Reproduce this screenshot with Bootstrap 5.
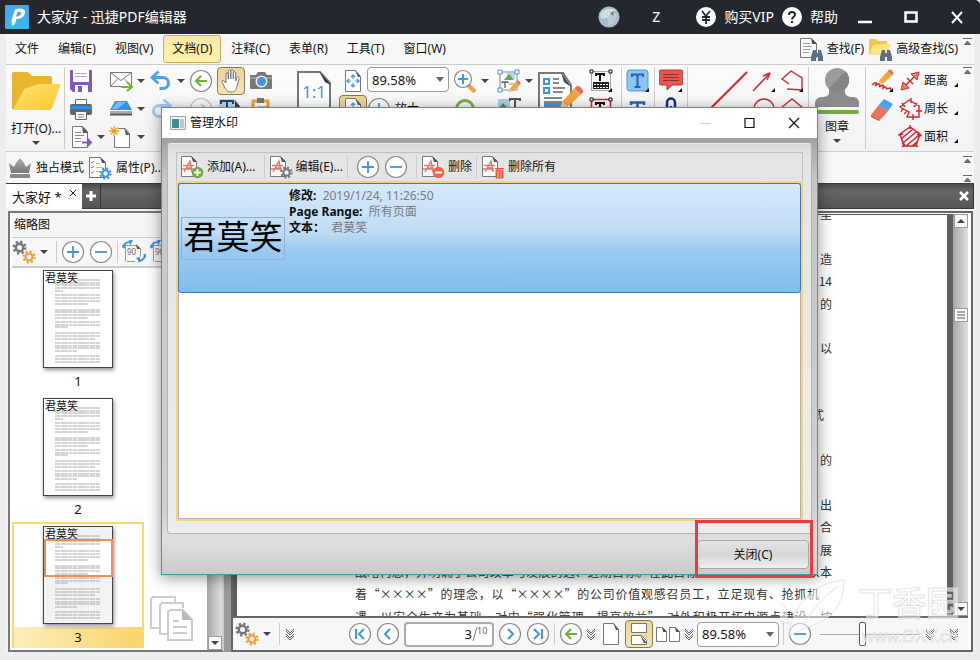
<!DOCTYPE html>
<html lang="zh-CN">
<head>
<meta charset="utf-8">
<meta name="viewport" content="width=device-width, initial-scale=1">
<title>大家好 - 迅捷PDF编辑器</title>
<link rel="stylesheet" href="https://cdn.jsdelivr.net/npm/bootstrap@5.3.0/dist/css/bootstrap.min.css">
<style>
body{font:12px/16px "Noto Sans","Noto Sans CJK SC",sans-serif;color:#111;background:#ededed;min-height:100vh;overflow:hidden}
button,input,select{font:inherit;color:inherit}
svg{display:block;flex:none}
.i24{width:24px;height:24px}
.plain{border:0;background:none;padding:0;white-space:nowrap;display:flex;align-items:center;justify-content:center;flex:none;color:inherit}
.app{min-height:100vh;position:relative}
.titlebar{height:34px;background:#25272f;color:#fff;padding:0 16px 0 5px;border-radius:0 5px 0 0;font-size:14px}
.titlebar .winctl{width:14px;height:14px}
.shell{margin:0 6px 0 6px;background:#f7f7f7}
.menus{height:31px;border-bottom:1px solid #ccc}
.menubar{gap:1px}
.menubar .mi{padding:0 9px;height:28px;border:1px solid transparent;border-width:1px 0;border-radius:3px;margin-top:1px}
.menubar .mi.on{background:linear-gradient(#f8e8ad,#fff3a8);border:1px solid #cfa95c;padding:0 8px}
.ribbon{height:87px;border-bottom:1px solid #ccc;padding:2px 0 0 2px;background:linear-gradient(#fbfbfb,#f3f3f3)}
.tool{width:24px;height:28px}
.wide{width:28px}
.pressed{background:linear-gradient(#e9d49a,#f7e6b4);border:1px solid #8f7a49;border-radius:4px}
.dd{width:16px;height:28px}
.dd::after,.tri{content:"";border:4px solid transparent;border-top-color:#444;border-bottom:0;width:0;height:0;display:block}
.bar{width:1px;background:#ccc;flex:none}
.ribbon .bar{height:82px}
.big{width:56px;height:84px;flex-direction:column;justify-content:flex-start}
.bigicon{width:48px;height:48px}
.page11{width:34px;height:48px}
.combo{appearance:none;border:1px solid #999;border-radius:4px;height:25px;width:82px;padding:0 4px;font-size:13px;background:#fff url("data:image/svg+xml,%3Csvg xmlns='http://www.w3.org/2000/svg' width='8' height='5'%3E%3Cpath d='M0 0h8l-4 5z' fill='%23666'/%3E%3C/svg%3E") no-repeat right 4px center}
.fold{width:12px;flex:none;color:#666}
.quick{height:31px;padding-left:2px}
.tabs{height:26px;background:linear-gradient(#4b4b4b,#666 30%,#555);border:1px solid #3b3b3b;border-width:1px 0}
.doctab{background:#fff;width:76px;padding:0 6px 0 6px;height:25px;font-size:13px}
.tabs .sq{width:19px;height:24px;color:#fff;border-right:1px solid #333}
.main{padding:2px 1px 0 2px;background:#f2f2f2;min-height:442px}
.thumbs{width:216px;border:2px solid #777;border-right-color:#ccc;padding:0 0 0 2px;background:#fff}
.thumbs .cap{height:24px;padding-left:2px;background:#f5f5f5}
.thumbs .tools{height:31px;background:#f6f6f6;border:1px solid #ccc;border-width:1px 0 2px}
.thumbs .tools .bar,.status .bar,.dlgtools .bar{height:22px}
.strip{width:132px}
.pageitem{height:128px;border:2px solid transparent;padding-top:2px;display:flex;flex-direction:column;align-items:center;text-decoration:none;color:#111;font-size:13px;position:relative;flex:none}
.pageitem:first-child{height:126px;padding-top:0}
.pageitem.on{height:126px;border-color:#f6d877;border-bottom:0}
.pageitem.on .num{background:linear-gradient(90deg,#fdeebb,#fbd468)}
.pageitem .sheet{width:70px;height:98px;border:1px solid #444;box-shadow:1px 2px 4px rgba(0,0,0,.45);background:#fff;overflow:hidden;position:relative}
.pageitem .num{width:100%;height:21px;line-height:20px;text-align:center;margin-top:3px}
.sheet .wm{position:absolute;top:0;left:1px;font-size:11px;line-height:14px}
.sheet svg{width:68px;height:96px}
.viewbox{position:absolute;left:30px;top:15px;width:69px;height:38px;border:2px solid #ef8f55}
.pageitem.on .sheet{background:linear-gradient(#f1f3f6 14px,#fff 14px,#fff 50px,#f3f3f5 50px)}
.sb{width:15px;background:linear-gradient(90deg,#aaa,#e2e2e2);border-left:1px solid #aaa}
.sb .box{height:14px;background:#fafafa;border:1px solid #999}
.sb .before{flex:2}
.sb .after{flex:7}
.ghost{position:absolute;right:12px;bottom:8px;width:44px;height:46px}
.split{width:7px;background:#999}
.docframe{border:2px solid #666;background:#fff;padding:1px 3px 0 0}
.canvas{background:#5f5f5f;padding:0 6px 0 4px;overflow:hidden;border-top:1px solid #555}
.paper{background:#fff;position:relative;overflow:hidden;height:100%}
.lines{position:absolute;top:-12px;bottom:-12px;left:118px;width:477px;font:12px/22px "Noto Sans CJK SC",sans-serif;color:#333}
.lines p{margin:0;height:22px;white-space:nowrap;text-align:right}
.lines .full{text-align-last:justify}
.lines .short{margin-right:13px}
.status{height:34px;border-top:2px solid #666;background:#f7f7f7;padding-left:2px}
.tight{gap:2px}
.pageno{border:2px solid #aaa;border-radius:4px;width:90px;height:25px;background:#fff;padding-right:2px}
.pageno input{border:0;width:66px;text-align:right;padding:0;background:none;font-size:13px}
.pageno sup{font-size:9px;top:-3px;color:#666}
.zoomer{appearance:none;width:100px;height:24px;background:linear-gradient(#aaa,#aaa) center/100% 1px no-repeat;margin:0}
.zoomer::-webkit-slider-thumb{appearance:none;width:7px;height:24px;border:1px solid #555;border-radius:2px;background:#fff}
.base{height:8px}
.dialogwin{position:absolute;left:161px;right:162px;top:107px;height:468px;border:1px solid #26a89b;box-shadow:0 3px 14px rgba(0,0,0,.42);background:#c9c9c9;z-index:5}
.dlgtitle{height:30px;background:#fff;padding:0 17px 0 8px;flex:none}
.dlgbody{background:linear-gradient(#a0a0a0,#c7c7c7 40px,#cfcfcf 85%,#e0e0e0 92%,#cacaca);padding:5px}
.inner{background:linear-gradient(#d6d6d6,#e4e4e4 12px,#ececec);border:1px solid #b4b4b4;border-top-color:#eee;border-radius:4px;padding:8px 8px 12px}
.dlgtools{height:29px;border:1px solid #c0c0c0;border-bottom:0;padding-left:3px}
.dlgtools .act{gap:3px}
.listbox{border:2px solid #f3d67c;background:#fff;box-shadow:inset 0 0 0 1px #b9aeb8;border-radius:2px}
.selrow{height:110px;border:1px solid #3f76ba;border-radius:3px;background:linear-gradient(#d6e9fa,#bfdcf4 45%,#9ccaf0 60%,#82bcec);padding-left:2px}
.preview{width:104px;height:43px;border:1px solid #8fb2d3;font-size:33px;line-height:38px;color:#000}
.facts{padding:4px 0 0 4px}
.gray{color:#747b83}
.dlgfoot{padding:6px 3px 0 0}
.closebtn{width:112px;height:29px;border:1px solid #a6a6a6;border-radius:4px;background:linear-gradient(#e4e4e4,#d6d6d6 50%,#f0f0f0)}
.frame-red{position:absolute;right:4px;bottom:-4px;width:118px;height:58px;border:3px solid #ee3a3a;z-index:6;pointer-events:none}
.leafmark{position:absolute;right:10px;bottom:6px;width:190px;height:80px;z-index:4;pointer-events:none}
</style>
<script src="https://cdn.jsdelivr.net/npm/bootstrap@5.3.0/dist/js/bootstrap.bundle.min.js"></script>
</head>
<body>
<svg class="position-absolute" width="0" height="0" aria-hidden="true">
<defs>
<linearGradient id="gSky" x2="0" y2="1"><stop stop-color="#45a3ee"/><stop offset="1" stop-color="#3bb8e6"/></linearGradient>
<linearGradient id="gFold" x2="1" y2="1"><stop stop-color="#ffe27a"/><stop offset="1" stop-color="#fbc92d"/></linearGradient>
<linearGradient id="gCrown" x2="0" y2="1"><stop stop-color="#aaa"/><stop offset="1" stop-color="#777"/></linearGradient>
</defs>
<symbol id="logo" viewBox="0 0 24 24"><rect width="24" height="24" rx="1" fill="url(#gSky)"/><path d="M7 21 6.500 15 10 4.500c3-1.500 9-1.500 10 1.500.8 4-3 8-7 8l-1.500-.3L10 19z" fill="#fff"/><path d="m12.500 7-1.500 4.500c3 0 5-1.500 5-3.500 0-1.200-1.500-1.500-3.500-1z" fill="#45a8ea"/></symbol>
<symbol id="corner" viewBox="0 0 24 24"><path d="M23 19v4h-4z" fill="#111"/></symbol>
<symbol id="page" viewBox="0 0 24 24"><path d="M4.500 1.500h10l5 6v15h-15z" fill="#fff" stroke="#777"/><path d="M14 1l6 7h-3z" fill="#555"/></symbol>
<symbol id="save" viewBox="0 0 24 24"><path d="M2 1h20a1 1 0 0 1 1 1v21H4l-3-3V2a1 1 0 0 1 1-1z" fill="#7e57c2"/><path d="M4 1h16v12H4z" fill="#fff"/><path d="M6 4.500h12M6 7.500h12" stroke="#b9a5de"/><path d="M6 16h13v7H6z" fill="#fff"/><path d="M9 17h4v6H9z" fill="#7e57c2"/></symbol>
<symbol id="print" viewBox="0 0 24 24"><path d="M6.500 2.500h11v5h-11z" fill="#fff" stroke="#666"/><rect x="1" y="7" width="22" height="11" rx="2" fill="#666"/><path d="M1 9h22v3H1z" fill="#2f8fe6"/><path d="M6.500 14.500h11v8h-11z" fill="#fff" stroke="#666"/><path d="M9 17.500h6M9 20h6" stroke="#888"/></symbol>
<symbol id="export" viewBox="0 0 24 24"><path d="M3.500 1.500h10l5 5v16h-15z" fill="#fff" stroke="#777"/><path d="M13 1l6 7h-5z" fill="#555"/><path d="M6 7.500h6M6 10.500h9M6 13.500h6M6 16.500h6" stroke="#888"/><path d="M13 17.500h9m-4-4 4 4-4 4" fill="none" stroke="#7e57c2" stroke-width="2"/></symbol>
<symbol id="mail" viewBox="0 0 24 24"><path d="M1.500 3.500h21v14h-21z" fill="#fff" stroke="#777"/><path d="m1.500 3.500 10.500 8 10.500-8M1.500 17.500 9 9.500m13.500 8-7.500-8" fill="none" stroke="#777"/><path d="M12 18h10m-4-5 5 5-5 4" fill="none" stroke="#6fb52c" stroke-width="2"/></symbol>
<symbol id="scan" viewBox="0 0 24 24"><path d="M6 4h12l5 9H1z" fill="#2f93ec"/><path d="M8 5h9L8 12H3z" fill="#76bdf7"/><path d="M1 14h22v2.500H1z" fill="#aaa"/><path d="M1 16.500h22v2H1z" fill="#555"/></symbol>
<symbol id="newdoc" viewBox="0 0 24 24"><path d="M5.500 3.500h11l4 5v14h-15z" fill="#fff" stroke="#777"/><path d="M15 3l6 7h-4z" fill="#555"/><circle cx="5" cy="6" r="5" fill="#fff"/><path d="M5 1v10M0 6h10M1.500 2.500l7 7m0-7-7 7" stroke="#f39a1e" stroke-width="1.300"/></symbol>
<symbol id="undo" viewBox="0 0 24 24"><path d="M4 8.500h9.500c8 0 8 11 0 11h-3" fill="none" stroke="#49a3ee" stroke-width="3"/><path d="m9.500 2.500-6.500 6 6.500 6" fill="none" stroke="#49a3ee" stroke-width="2.800"/></symbol>
<symbol id="redo" viewBox="0 0 24 24"><g opacity=".5"><path d="M20 8.500h-9.500c-8 0-8 11 0 11h3" fill="none" stroke="#49a3ee" stroke-width="3"/><path d="m14.500 2.500 6.500 6-6.500 6" fill="none" stroke="#49a3ee" stroke-width="2.800"/></g></symbol>
<symbol id="ring" viewBox="0 0 24 24"><circle cx="12" cy="12" r="10.500" fill="#fff" stroke="#8a8a8a" stroke-width="1.200"/></symbol>
<symbol id="back" viewBox="0 0 24 24"><use href="#ring"/><path d="M18 12H7m5-5-5 5 5 5" fill="none" stroke="#6fb52c" stroke-width="2"/></symbol>
<symbol id="fwd" viewBox="0 0 24 24"><g opacity=".5"><use href="#ring"/><path d="M6 12h11m-5-5 5 5-5 5" fill="none" stroke="#aaa" stroke-width="2"/></g></symbol>
<symbol id="plus" viewBox="0 0 24 24"><use href="#ring"/><path d="M6 12h12M12 6v12" stroke="#3f95e2" stroke-width="1.800"/></symbol>
<symbol id="minus" viewBox="0 0 24 24"><use href="#ring"/><path d="M6 12h12" stroke="#3f95e2" stroke-width="1.800"/></symbol>
<symbol id="first" viewBox="0 0 24 24"><use href="#ring"/><path d="M8 7v10m8-10-5 5 5 5" fill="none" stroke="#3f95e2" stroke-width="2"/></symbol>
<symbol id="prev" viewBox="0 0 24 24"><use href="#ring"/><path d="m14 7-5 5 5 5" fill="none" stroke="#3f95e2" stroke-width="2"/></symbol>
<symbol id="next" viewBox="0 0 24 24"><use href="#ring"/><path d="m10 7 5 5-5 5" fill="none" stroke="#3f95e2" stroke-width="2"/></symbol>
<symbol id="last" viewBox="0 0 24 24"><use href="#ring"/><path d="M16 7v10M8 7l5 5-5 5" fill="none" stroke="#3f95e2" stroke-width="2"/></symbol>
<symbol id="hand" viewBox="0 0 24 24"><path d="M7 14V5c0-1.800 2.300-1.800 2.300 0v5V2.500c0-2 2.500-2 2.500 0V10 2c0-1.800 2.500-1.800 2.500 0v8-6c0-1.800 2.400-1.800 2.400 0v8l1-3c.6-2 2.800-1.300 2.400.5L18 17c-1 4-2 6-6 6-3 0-4.500-1.500-6-4l-3-6c-.8-1.800 1-2.500 2-1z" fill="#fff" stroke="#777"/></symbol>
<symbol id="camera" viewBox="0 0 24 24"><path d="M2 6h5l2-3h7l2 3h4a1 1 0 0 1 1 1v12a1 1 0 0 1-1 1H2a1 1 0 0 1-1-1V7a1 1 0 0 1 1-1z" fill="#777"/><path d="M1 8h22v2H1z" fill="#9b9b9b"/><circle cx="12.500" cy="12.500" r="6" fill="#eee"/><circle cx="12.500" cy="12.500" r="4.500" fill="#3f95e2"/></symbol>
<symbol id="tsel" viewBox="0 0 24 24"><path d="M0 2h16v18H0z" fill="#b6dbf8"/><path d="M2 7V4h12v3M8 4v13m-3 0h6" fill="none" stroke="#345" stroke-width="2"/><path d="m16 3 7 9h-5l3 8-5-5z" fill="#444"/></symbol>
<symbol id="paste" viewBox="0 0 24 24"><path d="M4 4h15v18H4z" fill="#fff" stroke="#eda23b" stroke-width="3"/><path d="M8 1h7v5H8z" fill="#777"/><path d="M8 10h11v12H8z" fill="#fff" stroke="#777"/></symbol>
<symbol id="fit" viewBox="0 0 24 24"><use href="#page"/><path d="M12 6v4m-2-2 2-2 2 2m-2 6v4m-2-2 2 2 2-2M6 12h4M8 10l-2 2 2 2m6-2h4m-2-2 2 2-2 2" fill="none" stroke="#3f95e2" stroke-width="1.200"/></symbol>
<symbol id="zoomin" viewBox="0 0 24 24"><path d="m15 16 7 7" stroke="#f4a43a" stroke-width="4"/><circle cx="10" cy="10" r="8.500" fill="#fff" stroke="#888" stroke-width="1.200"/><path d="M5 10h10M10 5v10" stroke="#3f95e2" stroke-width="2"/></symbol>
<symbol id="loop" viewBox="0 0 24 24"><circle cx="12" cy="12" r="8.500" fill="none" stroke="#7bae46" stroke-width="3"/></symbol>
<symbol id="pencil" viewBox="0 0 24 24"><path d="M15 3 21 9 8 21l-5-5z" fill="#f5a63b"/><path d="m15 3 2-2c2-1 7 3 6 6l-2 2z" fill="#ef6a5a"/><path d="m3 16 5 5-7 2z" fill="#e7c89b"/></symbol>
<symbol id="picedit" viewBox="0 0 24 24"><path d="M3 3h17v18H3z" fill="#fff" stroke="#888"/><path d="M10 4h8v6h-8z" fill="#aad9f5"/><path d="m7 11 5-6 5 6z" fill="#6aa843"/><path d="M5 14v-1h6v1M8 13v6" fill="none" stroke="#222"/><path d="M12 15h6" stroke="#888"/><path d="M1 1h4v4H1zM18 1h4v4h-4zM1 19h4v4H1z" fill="#fff" stroke="#3f95e2"/><use href="#pencil" x="11" y="11" width="13" height="13"/></symbol>
<symbol id="pict" viewBox="0 0 24 24"><path d="M1 2h12v16H1z" fill="#a9cfe8"/><path d="m1 13 5-7 7 8v5H1z" fill="#538b55"/><path d="M13 4V2h10v2M18 2v11m-2 0h4" fill="none" stroke="#555" stroke-width="2"/></symbol>
<symbol id="docedit" viewBox="0 0 48 48"><path d="M2 2h24l8 12v34H2z" fill="#fff" stroke="#777" stroke-width="2"/><path d="M24 1 34 16l-7-5z" fill="#444"/><g fill="none" stroke="#3f95e2" stroke-width="2"><path d="M7 8h5v5H7zM7 17h5v5H7z"/></g><path d="M16 8h6M16 12h6M16 17h12M16 21h10M7 27h18M7 31h18M7 35h18" stroke="#888" stroke-width="2"/><path d="M7 33h19" stroke="#3f95e2" stroke-width="2"/><use href="#pencil" x="22" y="14" width="25" height="25"/></symbol>
<symbol id="tkey" viewBox="0 0 24 24"><path d="M2.500 2.500h19v19h-19z" fill="none" stroke="#555" stroke-dasharray="1 1"/><path d="M7 7V5h8v2M11 5v7" fill="none" stroke="#111" stroke-width="2"/><path d="M4 13h16v7H4z" fill="#222"/><path d="M5 15.500h14M5 18.500h14" stroke="#fff" stroke-dasharray="2 1"/><path d="M1 1h3v3H1zM20 1h3v3h-3z" fill="#fff" stroke="#111"/><use href="#corner"/></symbol>
<symbol id="tred" viewBox="0 0 24 24"><path d="M2.500 2.500h19v19h-19z" fill="none" stroke="#d8203a" stroke-width="1.500"/><path d="M7 8V6h8v2M11 6v9" fill="none" stroke="#111" stroke-width="2"/><path d="M1 1h3v3H1zM20 1h3v3h-3z" fill="#fff" stroke="#111"/></symbol>
<symbol id="tblue" viewBox="0 0 24 24"><rect x="1" y="1" width="21" height="21" rx="3" fill="#8bc5f5" stroke="#4b98dc"/><path d="M6 8V5.500h11V8M11.500 5v13m-3 0h6" fill="none" stroke="#2865ac" stroke-width="2.200"/><use href="#corner"/></symbol>
<symbol id="tplain" viewBox="0 0 24 24"><path d="M5 8V5.500h13V8M11.500 5v15" fill="none" stroke="#2865ac" stroke-width="2.500"/></symbol>
<symbol id="comment" viewBox="0 0 24 24"><path d="M2 1h20a2 2 0 0 1 2 2v11a2 2 0 0 1-2 2H13l-5 5v-5H2a2 2 0 0 1-2-2V3a2 2 0 0 1 2-2z" fill="#e95450" stroke="#bd3737"/><path d="M4 5.500h16M4 8.500h16M4 11.500h16" stroke="#8f2f2f"/><use href="#corner"/></symbol>
<symbol id="clip" viewBox="0 0 24 24"><path d="M8 24V6c0-6 8-6 8 0v16M12 9v15" fill="none" stroke="#1d2f78" stroke-width="2.500"/></symbol>
<symbol id="line" viewBox="0 0 40 40"><path d="M2 38 39 1" stroke="#d9232e" stroke-width="2"/></symbol>
<symbol id="arrow" viewBox="0 0 24 24"><path d="M1 22 18 4" stroke="#d9232e" stroke-width="1.500"/><path d="m18 4-7 3m7-3-3 7" fill="none" stroke="#d9232e" stroke-width="1.500"/><use href="#corner"/></symbol>
<symbol id="poly" viewBox="0 0 24 24"><path d="m9 15-7-5 9-8 11 7v12l-15-1" fill="none" stroke="#d9232e" stroke-width="1.400"/><use href="#corner"/></symbol>
<symbol id="oval" viewBox="0 0 24 24"><circle cx="12" cy="12" r="10" fill="none" stroke="#d9232e" stroke-width="1.400"/></symbol>
<symbol id="pent" viewBox="0 0 24 24"><path d="m1 11 11-9 11 9-4 11H5z" fill="none" stroke="#d9232e" stroke-width="1.400"/></symbol>
<symbol id="stamp" viewBox="0 0 48 48"><path d="M16 20h16v5c0 4 4 5 8 5s6 3 6 6v4H2v-4c0-3 3-6 7-6s7-1 7-5z" fill="#8b8b8b"/><circle cx="24" cy="13" r="12" fill="#9c9c9c"/><path d="m15.500 21.500 17-17c8 8 2 20.500-8.500 20.500-4 0-6.500-1.500-8.500-3.500z" fill="#858585"/><rect x="2" y="43" width="44" height="4" rx="2" fill="#78ac3e"/></symbol>
<symbol id="draw" viewBox="0 0 24 24"><use href="#pencil" x="7" y="0" width="17" height="17"/><path d="M2 16c4-4 6-2 3 1 4-4 6-1 4 1 4-3 5-2 4 1l2-1 2 2 3-1 1 2" fill="none" stroke="#d9232e" stroke-width="1.500"/><use href="#corner"/></symbol>
<symbol id="eraser" viewBox="0 0 24 24"><path d="M14 2 23 7 18 14 8 9z" fill="#4ba3e8"/><path d="m8 9 10 5-8 9-9-5z" fill="#ef6f57"/><path d="m1 18 9 5-1 1-8-4z" fill="#c3574a"/></symbol>
<symbol id="dist" viewBox="0 0 24 24"><path d="M5 19 19 5M9 9l6 6" stroke="#d9232e" stroke-width="1.500"/><path d="m21 3-2 8-6-6zM3 21l2-8 6 6z" fill="#ef7a76" stroke="#d9232e"/></symbol>
<symbol id="perim" viewBox="0 0 24 24"><path d="M2 10 11 3l10 6v11H9l2-5zM4 6l3 4M13 1v5m6 0-3 4m2 4h6m-9 3v6M5 11l-2 4m6-1-3 3" fill="none" stroke="#d9232e" stroke-width="1.400"/></symbol>
<symbol id="area" viewBox="0 0 24 24"><path d="m2 9 10-7 10 7-4 12H6zM3 14 15 4M4 19 19 6M8 21 21 10M14 21l6-5M12 0v4M0 10l5-1m14 0 5 2M4 22l3-3m9 0 4 3" fill="none" stroke="#d9232e" stroke-width="1.500"/></symbol>
<symbol id="bino" viewBox="0 0 12 12"><path d="M2 1h3v3h2V1h3l2 7v4H7V8H5v4H0V8z" fill="#5c6e82"/></symbol>
<symbol id="find" viewBox="0 0 24 24"><path d="M1.500 1.500h11l5 5v14h-16z" fill="#fff" stroke="#777"/><path d="m12 1 6 6h-5z" fill="#555"/><path d="M4 6.500h7M4 9.500h9M4 12.500h7M4 15.500h6" stroke="#999"/><use href="#bino" x="12" y="12" width="12" height="12"/></symbol>
<symbol id="folder" viewBox="0 0 50 42"><path d="M1 3q0-2 2-2h14l4 4h18q2 0 2 2v10L8 38H1z" fill="#e8b52c"/><path d="M13 18l15-5h20q2 0 1 2l-8 22q-1 2-3 2H2z" fill="url(#gFold)"/></symbol>
<symbol id="findadv" viewBox="0 0 24 24"><path d="M1 2h7l2 2h9v14H1z" fill="#f4c744"/><path d="m5 8 14-1h4l-4 11H1z" fill="#fbe389"/><use href="#bino" x="12" y="12" width="12" height="12"/></symbol>
<symbol id="crown" viewBox="0 0 24 24"><path d="m1 7 5 4 2-4 4-5 4 5 2 4 5-4-2 10H3z" fill="url(#gCrown)"/><path d="M2 18h20v4H2z" fill="#888"/></symbol>
<symbol id="gear" viewBox="0 0 16 16"><circle cx="8" cy="8" r="4" fill="#f5f5f5" stroke="currentColor" stroke-width="2.500"/><circle cx="8" cy="8" r="6.200" fill="none" stroke="currentColor" stroke-width="2.600" stroke-dasharray="2.430 2.440"/></symbol>
<symbol id="gears" viewBox="0 0 24 24"><use href="#gear" x="0" y="0" width="15" height="15" color="#777"/><use href="#gear" x="10" y="10" width="14" height="14" color="#f1a033"/></symbol>
<symbol id="props" viewBox="0 0 24 24"><path d="M1.500 1.500h11l5 5v15h-16z" fill="#fff" stroke="#777"/><path d="m12 1 6 6h-4z" fill="#555"/><path d="m3 6 1 1 2-2M3 11l1 1 2-2M3 16l1 1 2-2" fill="none" stroke="#e7643e"/><path d="M8 7.500h4M8 11.500h6M8 15.500h4" stroke="#e7a07e"/><use href="#gear" x="11" y="11" width="13" height="13" color="#3f95e2"/></symbol>
<symbol id="wmdoc" viewBox="0 0 24 24"><path d="M1.500 1.500h10l5 5v15h-15z" fill="#fff" stroke="#777"/><path d="m11 1 6 6h-4z" fill="#555"/><path d="m4 17 6-11 2 11M6 13h6M3 10.500h11M2 14h11" fill="none" stroke="#e57570" stroke-width="1.400"/></symbol>
<symbol id="wmadd" viewBox="0 0 24 24"><use href="#wmdoc"/><circle cx="17.500" cy="17.500" r="5.800" fill="#69ad3d"/><path d="M14 17.500h7M17.500 14v7" stroke="#fff" stroke-width="2"/></symbol>
<symbol id="wmedit" viewBox="0 0 24 24"><use href="#wmdoc"/><use href="#gear" x="11" y="11" width="13" height="13" color="#777"/></symbol>
<symbol id="wmdel" viewBox="0 0 24 24"><use href="#wmdoc"/><circle cx="17.500" cy="17.500" r="5.800" fill="#f06449"/><path d="M14 17.500h7" stroke="#fff" stroke-width="2"/></symbol>
<symbol id="wmall" viewBox="0 0 24 24"><use href="#wmdoc"/><path d="M15 15h7v8h-7zM14 13.500h9" fill="#f06449" stroke="#e05535"/><path d="M17 15v8m3-8v8" stroke="#f9a08b"/></symbol>
<symbol id="rot" viewBox="0 0 24 24"><path d="M3.500 21.500v-16h11l4 4v7M5 21.500h8" fill="none" stroke="#999"/><path d="m14 4 5 5h-4z" fill="#555"/><text x="5" y="15" font-size="8" font-family="Noto Sans" fill="#666">90</text><path d="M1 8q1-6 7-6M23 15q-1 6-7 6" fill="none" stroke="#3f95e2" stroke-width="2"/><path d="M7 0h4L8 6zM0 5h4L2 9zM14 18l4-1v6zM21 14h3v4z" fill="#3f95e2"/></symbol>
<symbol id="foldi" viewBox="0 0 12 8"><path d="M1 .500h9M2.500 6.500h6L5.500 3z" fill="#777" stroke="#666"/></symbol>
<symbol id="chev" viewBox="0 0 12 14"><path d="m2 2 4 4 4-4M2 7l4 4 4-4M2 4l4 4 4-4M2 9l4 4 4-4" fill="none" stroke="#666"/></symbol>
<symbol id="cont" viewBox="0 0 24 24"><path d="M4.500 1.500h15v9h-15zM4.500 13.500h10l5 5v4h-15z" fill="#fff" stroke="#777"/><path d="m13 13 7 8h-3z" fill="#555"/></symbol>
<symbol id="two" viewBox="0 0 26 24"><path d="M1.500 5.500h6l4 4v10h-10zM14.500 5.500h6l4 4v10h-10z" fill="#fff" stroke="#777"/><path d="m7 5 5 5H8zM20 5l5 5h-4z" fill="#555"/></symbol>
<symbol id="txtlines" viewBox="0 0 68 96"><path d="M33 9h23M11 12h45m-45 2h45m-45 3h45m-45 3h8m-8 4h45m-45 3h45m-45 3h45m-45 3h33m-33 6h45m-45 2h45m-45 3h45m-45 3h33m-33 4h45m-45 3h45m-45 2h13m-13 6h45m-45 3h45m-45 3h40m-40 4h45m-45 3h45m-45 2h45m-45 3h22m-22 5h45m-45 3h45m-45 3h45" fill="none" stroke="#aaa" stroke-width="1" stroke-dasharray="5 .5 8 .4 3 .6"/></symbol>
</svg>

<div class="app d-flex flex-column">
<header class="titlebar d-flex align-items-center">
  <svg class="i24"><use href="#logo"/></svg><span class="ms-2">大家好 - 迅捷PDF编辑器</span>
  <svg class="ms-auto" width="22" height="22" viewBox="0 0 22 22"><circle cx="11" cy="11" r="10.500" fill="#a9bdca"/><path d="M2 8q7-8 16-4-4 1-6 5t-9 3z" fill="#cfdde5"/><path d="M9 13q5-8 10-5-1 9-8 12z" fill="#bccbd5"/><path d="m12 7 4-2-1 5z" fill="#8e7f7a"/></svg>
  <span class="px-4 mx-2">Z</span>
  <button class="plain ms-1" type="button"><svg class="me-2" width="20" height="20" viewBox="0 0 20 20"><circle cx="10" cy="10" r="10" fill="#fff"/><path d="m6 4 4 5 4-5m-4 5v8m-4-7h8m-8 3h8" fill="none" stroke="#25272f" stroke-width="1.800"/></svg>购买VIP</button>
  <button class="plain ms-2 me-1" type="button"><svg class="me-2" width="20" height="20" viewBox="0 0 20 20"><circle cx="10" cy="10" r="10" fill="#fff"/><path d="M7 8q0-3 3-3t3 2.500q0 1.500-1.500 2.500T10 12.500M10 14v2" fill="none" stroke="#25272f" stroke-width="2"/></svg>帮助</button>
  <button class="plain winctl mx-3" type="button" aria-label="最小化"><svg width="14" height="14"><path d="M0 12h14" stroke="#fff" stroke-width="2.500"/></svg></button>
  <button class="plain winctl mx-3" type="button" aria-label="最大化"><svg width="14" height="14"><path d="M1.500 2.500h11v9h-11z" fill="none" stroke="#fff" stroke-width="2.500"/></svg></button>
  <button class="plain winctl ms-3" type="button" aria-label="关闭"><svg width="14" height="14"><path d="m2 2 10 11M12 2 2 13" stroke="#fff" stroke-width="2"/></svg></button>
</header>

<div class="shell d-flex flex-column flex-grow-1">
<nav class="menus d-flex">
  <div class="menubar d-flex"><button class="plain mi">文件</button><button class="plain mi">编辑(E)</button><button class="plain mi">视图(V)</button><button class="plain mi on">文档(D)</button><button class="plain mi">注释(C)</button><button class="plain mi">表单(R)</button><button class="plain mi">工具(T)</button><button class="plain mi">窗口(W)</button></div>
  <div class="ms-auto d-flex gap-1"><button class="plain gap-1"><svg class="i24"><use href="#find"/></svg>查找(F)</button><button class="plain gap-1"><svg class="i24"><use href="#findadv"/></svg>高级查找(S)</button><svg class="fold mt-1" height="8"><use href="#foldi"/></svg></div>
</nav>

<div class="ribbon d-flex">
  <button class="plain big"><svg class="mt-1" width="50" height="42"><use href="#folder"/></svg><span class="mt-2">打开(O)...</span><span class="tri mt-1"></span></button>
  <span class="bar me-1"></span>
  <div><button class="plain tool" aria-label="保存"><svg class="i24"><use href="#save"/></svg></button><button class="plain tool" aria-label="打印"><svg class="i24"><use href="#print"/></svg></button><button class="plain tool" aria-label="导出"><svg class="i24"><use href="#export"/></svg></button></div>
  <div class="d-flex flex-column justify-content-end"><button class="plain dd" aria-label="更多"></button></div>
  <div><button class="plain tool" aria-label="邮件"><svg class="i24"><use href="#mail"/></svg></button><button class="plain tool" aria-label="扫描"><svg class="i24"><use href="#scan"/></svg></button><button class="plain tool" aria-label="新建"><svg class="i24"><use href="#newdoc"/></svg></button></div>
  <div><button class="plain dd" aria-label="更多"></button><button class="plain dd" aria-label="更多"></button><button class="plain dd" aria-label="更多"></button></div>
  <div><button class="plain tool" aria-label="撤销"><svg class="i24"><use href="#undo"/></svg></button><button class="plain tool" aria-label="重做"><svg class="i24"><use href="#redo"/></svg></button></div>
  <div><button class="plain dd" aria-label="更多"></button><button class="plain dd" aria-label="更多"></button></div>
  <div><button class="plain tool" aria-label="后退"><svg class="i24"><use href="#back"/></svg></button><button class="plain tool" aria-label="前进"><svg class="i24"><use href="#fwd"/></svg></button></div>
  <div class="mx-1"><button class="plain tool wide pressed" aria-label="手形"><svg class="i24"><use href="#hand"/></svg></button><button class="plain tool wide" aria-label="选择文本"><svg class="i24"><use href="#tsel"/></svg></button></div>
  <div><button class="plain tool" aria-label="快照"><svg class="i24"><use href="#camera"/></svg></button><button class="plain tool" aria-label="粘贴"><svg class="i24"><use href="#paste"/></svg></button></div>
  <div class="d-flex align-items-center"><button class="plain dd" aria-label="更多"></button></div>
  <button class="plain align-items-start ms-2 pt-1" aria-label="实际大小 1:1"><svg class="page11" viewBox="0 0 34 48"><path d="M1 1h22l10 11v40H1z" fill="#fff" stroke="#777" stroke-width="2"/><path d="m22 0 12 14-6-3z" fill="#333"/><text x="17" y="27" text-anchor="middle" font-size="17" fill="#3f95e2" font-family="Noto Sans">1:1</text></svg></button>
  <div class="ms-2"><div class="d-flex"><button class="plain tool wide" aria-label="适合页面"><svg class="i24"><use href="#fit"/></svg></button><select class="combo" aria-label="缩放"><option>89.58%</option></select></div>
  <div class="d-flex"><button class="plain tool wide pressed" aria-label="适合宽度"><svg class="i24"><use href="#fit"/></svg></button><button class="plain gap-1"><svg class="i24"><use href="#plus"/></svg>放大</button></div></div>
  <div class="ms-1"><button class="plain tool" aria-label="放大"><svg class="i24"><use href="#zoomin"/></svg></button><button class="plain tool" aria-label="旋转"><svg class="i24"><use href="#loop"/></svg></button></div>
  <div><button class="plain dd" aria-label="更多"></button></div>
  <div class="ms-1"><button class="plain tool" aria-label="编辑内容"><svg class="i24"><use href="#picedit"/></svg></button><button class="plain tool" aria-label="图片文字"><svg class="i24"><use href="#pict"/></svg></button></div>
  <div><button class="plain dd" aria-label="更多"></button><button class="plain dd" aria-label="更多"></button></div>
  <button class="plain align-items-start pt-1" aria-label="编辑表单"><svg class="bigicon"><use href="#docedit"/></svg></button>
  <div class="ms-1"><button class="plain tool" aria-label="打字机"><svg class="i24"><use href="#tkey"/></svg></button><button class="plain tool" aria-label="文本框"><svg class="i24"><use href="#tred"/></svg></button></div>
  <span class="bar ms-2"></span>
  <div class="mx-1"><button class="plain tool" aria-label="高亮"><svg class="i24"><use href="#tblue"/></svg></button><button class="plain tool" aria-label="文字"><svg class="i24"><use href="#tplain"/></svg></button></div>
  <span class="bar"></span>
  <div class="mx-1"><button class="plain tool" aria-label="批注"><svg class="i24"><use href="#comment"/></svg></button><button class="plain tool" aria-label="附件"><svg class="i24"><use href="#clip"/></svg></button></div>
  <span class="bar"></span>
  <button class="plain align-items-start pt-1 ms-auto" aria-label="直线"><svg width="40" height="40"><use href="#line"/></svg></button>
  <div class="ms-1"><button class="plain tool" aria-label="箭头"><svg class="i24"><use href="#arrow"/></svg></button><button class="plain tool" aria-label="椭圆"><svg class="i24"><use href="#oval"/></svg></button></div>
  <div class="ms-1"><button class="plain tool" aria-label="折线"><svg class="i24"><use href="#poly"/></svg></button><button class="plain tool" aria-label="多边形"><svg class="i24"><use href="#pent"/></svg></button></div>
  <span class="bar ms-1"></span>
  <button class="plain big"><svg class="bigicon"><use href="#stamp"/></svg><span class="mt-1">图章</span><span class="tri mt-1"></span></button>
  <span class="bar"></span>
  <div class="ms-1"><button class="plain tool" aria-label="铅笔"><svg class="i24"><use href="#draw"/></svg></button><button class="plain tool" aria-label="橡皮"><svg class="i24"><use href="#eraser"/></svg></button></div>
  <div class="ms-1"><button class="plain tight tool w-auto"><svg class="i24"><use href="#dist"/></svg>距离<svg class="align-self-end mb-2 ms-1" width="4" height="4"><path d="M4 0v4H0z"/></svg></button><button class="plain tight tool w-auto"><svg class="i24"><use href="#perim"/></svg>周长<svg class="align-self-end mb-2 ms-1" width="4" height="4"><path d="M4 0v4H0z"/></svg></button><button class="plain tight tool w-auto"><svg class="i24"><use href="#area"/></svg>面积<svg class="align-self-end mb-2 ms-1" width="4" height="4"><path d="M4 0v4H0z"/></svg></button></div>
  <svg class="fold ms-1" height="8"><use href="#foldi"/></svg>
</div>

<div class="quick d-flex align-items-center gap-1">
  <button class="plain gap-1"><svg class="i24"><use href="#crown"/></svg>独占模式</button>
  <button class="plain gap-1"><svg class="i24"><use href="#props"/></svg>属性(P)...</button>
  <div class="ms-auto h-100 d-flex flex-column justify-content-between"><svg class="fold mt-1" height="8"><use href="#foldi"/></svg><svg class="fold" height="8"><use href="#foldi"/></svg></div>
</div>

<div class="tabs d-flex">
  <div class="doctab d-flex align-items-center justify-content-between"><span>大家好 *</span><button class="plain mb-2" aria-label="关闭标签"><svg width="6" height="6"><path d="m0 0 6 6M6 0 0 6" stroke="#222"/></svg></button></div>
  <button class="plain sq" aria-label="新标签"><svg width="10" height="10"><path d="M5 0v10M0 5h10" stroke="#fff" stroke-width="3"/></svg></button>
  <button class="plain sq ms-auto" aria-label="关闭"><svg width="10" height="10"><path d="m1 1 8 8M9 1 1 9" stroke="#fff" stroke-width="2.600"/></svg></button>
</div>

<main class="main d-flex flex-grow-1">
  <section class="thumbs d-flex flex-column flex-shrink-0 position-relative">
    <div class="cap d-flex align-items-center">缩略图</div>
    <div class="tools d-flex align-items-center">
      <button class="plain" aria-label="选项"><svg class="i24"><use href="#gears"/></svg></button><button class="plain dd" aria-label="更多"></button><span class="bar ms-1"></span>
      <button class="plain ms-1" aria-label="放大"><svg class="i24"><use href="#plus"/></svg></button><button class="plain mx-1" aria-label="缩小"><svg class="i24"><use href="#minus"/></svg></button><span class="bar"></span>
      <button class="plain ms-1" aria-label="左转 90"><svg class="i24"><use href="#rot"/></svg></button><button class="plain ms-1" aria-label="右转 90"><svg class="i24"><use href="#rot"/></svg></button>
    </div>
    <div class="d-flex flex-grow-1">
      <div class="strip d-flex flex-column">
        <a class="pageitem" href="#p1"><span class="sheet"><span class="wm">君莫笑</span><svg><use href="#txtlines"/></svg></span><span class="num">1</span></a>
        <a class="pageitem" href="#p2"><span class="sheet"><span class="wm">君莫笑</span><svg><use href="#txtlines"/></svg></span><span class="num">2</span></a>
        <a class="pageitem on" href="#p3"><span class="sheet"><span class="wm">君莫笑</span><svg><use href="#txtlines"/></svg></span><span class="viewbox"></span><span class="num">3</span></a>
      </div>
      <div class="sb ms-auto d-flex flex-column justify-content-between"><span class="box"></span><span class="box d-flex align-items-center justify-content-center"><span class="tri"></span></span></div>
    </div>
    <svg class="ghost me-3" viewBox="0 0 44 46"><g fill="#fff" stroke="#ccc" stroke-width="2"><path d="M25 6V1H3L1 3v29h8M33 12V7H12l-2 2v29h8"/><path d="M33 14H20l-2 2v28h24V24z"/><path d="M23 25h6M23 31h14M23 37h14"/></g><path d="m32 14 11 10H32z" fill="#bbb"/></svg>
  </section>
  <div class="split flex-shrink-0"></div>
  <section class="docframe d-flex flex-column flex-grow-1">
    <div class="d-flex flex-grow-1 overflow-hidden">
      <div class="canvas flex-grow-1"><div class="paper">
        <div class="lines d-flex flex-column justify-content-between"><p>里</p><p></p><p>造</p><p>14</p><p>的</p><p></p><p>以</p><p></p><p></p><p class="pe-2">式</p><p></p><p>的</p><p></p><p>出</p><p>合</p><p>展</p>
        <p class="full">战略构想，并明确了公司改革与发展的远、近期目标。在此目标的指引下，公司坚持以本</p>
        <p class="full short">着“××××”的理念，以“××××”的公司价值观感召员工，立足现有、抢抓机</p>
        <p class="full">遇，以安全生产为基础，对内“强化管理，提高效益”，对外积极开拓电源点建设，按</p></div>
      </div></div>
      <div class="sb d-flex flex-column"><span class="box d-flex align-items-center justify-content-center"><svg width="8" height="4"><path d="M0 4h8L4 0z" fill="#444"/></svg></span><span class="before"></span><span class="box d-flex align-items-center justify-content-center"><svg width="8" height="8"><path d="M0 1h8M0 4h8M0 7h8" stroke="#555"/></svg></span><span class="after"></span><span class="box d-flex align-items-center justify-content-center"><span class="tri"></span></span></div>
    </div>
    <div class="status d-flex align-items-center">
      <button class="plain" aria-label="选项"><svg class="i24"><use href="#gears"/></svg></button><button class="plain dd" aria-label="更多"></button><span class="bar mx-1"></span><button class="plain" aria-label="更多工具"><svg width="12" height="14"><use href="#chev"/></svg></button>
      <div class="d-flex align-items-center ms-auto gap-1">
        <button class="plain" aria-label="首页"><svg class="i24"><use href="#first"/></svg></button><button class="plain" aria-label="上一页"><svg class="i24"><use href="#prev"/></svg></button>
        <div class="pageno d-flex align-items-center"><input aria-label="页码" value="3"><svg width="5" height="16"><path d="M5 1 1 15" stroke="#777"/></svg><sup>10</sup></div>
        <button class="plain" aria-label="下一页"><svg class="i24"><use href="#next"/></svg></button><button class="plain" aria-label="末页"><svg class="i24"><use href="#last"/></svg></button>
        <span class="bar"></span>
        <div class="d-flex align-items-center tight"><button class="plain" aria-label="后退"><svg class="i24"><use href="#back"/></svg></button><button class="plain" aria-label="更多导航"><svg width="12" height="14"><use href="#chev"/></svg></button>
        <button class="plain" aria-label="单页"><svg class="i24"><use href="#page"/></svg></button><button class="plain tool wide pressed" aria-label="连续"><svg class="i24"><use href="#cont"/></svg></button><button class="plain" aria-label="双页"><svg width="26" height="24"><use href="#two"/></svg></button><button class="plain" aria-label="更多布局"><svg width="12" height="14"><use href="#chev"/></svg></button>
        <select class="combo" aria-label="页面缩放"><option>89.58%</option></select></div><span class="bar"></span>
        <button class="plain me-1" aria-label="缩小"><svg class="i24"><use href="#minus"/></svg></button><input class="zoomer" type="range" value="42" aria-label="缩放比例"><button class="plain" aria-label="更多"><svg width="12" height="14"><use href="#chev"/></svg></button><button class="plain ms-2 me-2" aria-label="更多"><svg width="12" height="14"><use href="#chev"/></svg></button>
      </div>
    </div>
  </section>
</main>
</div>
<div class="base"></div>

<svg class="leafmark" viewBox="0 0 190 80"><g fill="#fff" fill-opacity=".5" stroke="#ddd" stroke-opacity=".8"><path d="M8 62Q18 10 64 6q0 36-34 46zM24 50Q36 28 58 12M6 34q-8-8-18-12 2 22 20 28z"/><text x="78" y="42" font-size="34" font-family="Noto Sans CJK SC" font-weight="500">丁香园</text><text x="82" y="68" font-size="17" font-family="Liberation Sans">www.DXY.cn</text></g></svg>

<section class="dialogwin d-flex flex-column" role="dialog" aria-label="管理水印">
  <div class="dlgtitle d-flex align-items-center">
    <svg width="16" height="14" viewBox="0 0 16 14"><path d="M.5.500h15v13H.5z" fill="#eef2f4" stroke="#9aa5ad"/><path d="M2 3h7v9H2z" fill="#3f8f8a"/><path d="M10 3h4v9h-4z" fill="#bcc9d0"/></svg><span class="ms-1">管理水印</span>
    <button class="plain ms-auto" aria-label="最小化"><svg width="12" height="12"><path d="M0 6.500h11" stroke="#ccc"/></svg></button>
    <button class="plain mx-4 px-2" aria-label="最大化"><svg width="12" height="12"><path d="M1 1.500h9v9H1z" fill="none" stroke="#111" stroke-width="1.200"/></svg></button>
    <button class="plain" aria-label="关闭"><svg width="12" height="12"><path d="m1 1 10 10M11 1 1 11" stroke="#111" stroke-width="1.200"/></svg></button>
  </div>
  <div class="dlgbody d-flex flex-column flex-grow-1">
    <div class="inner d-flex flex-column flex-grow-1">
      <div class="dlgtools d-flex align-items-center">
        <button class="plain act"><svg class="i24"><use href="#wmadd"/></svg>添加(A)...</button><span class="bar mx-1 ms-2"></span>
        <button class="plain act"><svg class="i24"><use href="#wmedit"/></svg>编辑(E)...</button><span class="bar mx-1"></span>
        <button class="plain ms-1" aria-label="增加"><svg class="i24"><use href="#plus"/></svg></button><button class="plain mx-1" aria-label="减少"><svg class="i24"><use href="#minus"/></svg></button><span class="bar mx-1"></span>
        <button class="plain act"><svg class="i24"><use href="#wmdel"/></svg>删除</button><span class="bar mx-1"></span>
        <button class="plain act"><svg class="i24"><use href="#wmall"/></svg>删除所有</button>
      </div>
      <div class="listbox flex-grow-1">
        <div class="selrow d-flex"><div class="preview align-self-center text-center">君莫笑</div>
          <div class="facts"><div><b>修改:</b>&nbsp; <span class="gray">2019/1/24, 11:26:50</span></div><div><b>Page Range:</b>&nbsp; <span class="gray">所有页面</span></div><div><b>文本：</b>&nbsp; <span class="gray">君莫笑</span></div></div>
        </div>
      </div>
    </div>
    <div class="dlgfoot d-flex justify-content-end"><button class="closebtn">关闭(C)</button></div>
  </div>
  <div class="frame-red"></div>
</section>
</div>
</body>
</html>
